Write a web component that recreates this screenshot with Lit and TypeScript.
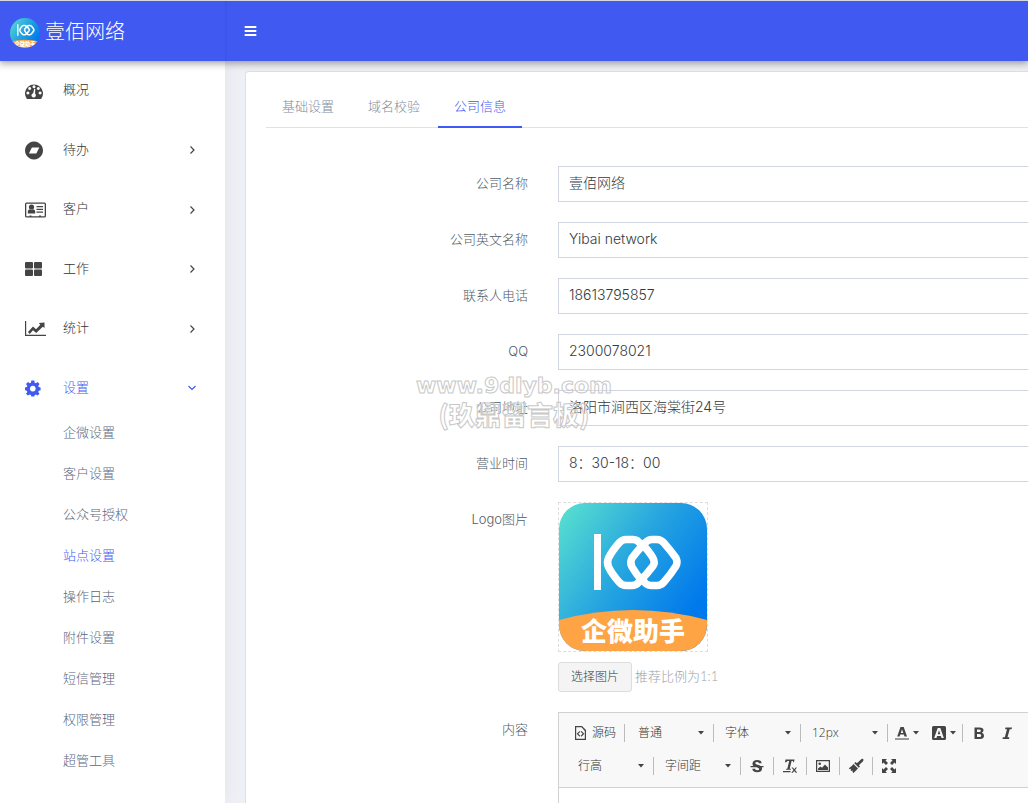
import { LitElement, html, css, svg, nothing } from "lit";
import { customElement, property, state } from "lit/decorators.js";

const icons = {
  gauge: svg`<path fill-rule="evenodd" d="M1.600 17.500A9 9 0 1 1 16.400 17.500Q16 18 15.300 18H2.700Q2 18 1.600 17.500ZM9 4.200a1.500 1.500 0 1 0 0.010 0ZM4.700 6a1.500 1.500 0 1 0 0.010 0ZM13.300 6a1.500 1.500 0 1 0 0.010 0ZM2.900 10.500a1.500 1.500 0 1 0 0.010 0ZM15.100 10.500a1.500 1.500 0 1 0 0.010 0ZM9.200 7.800L8.200 12.200A2.200 2.200 0 1 0 10 12.600L10.300 8.100Z"/>`,
  disc: svg`<path fill-rule="evenodd" d="M9 1.500a9 9 0 1 0 .01 0ZM6.900 7.500H14.300L11.300 13.500H3.900Z"/>`,
  card: svg`<path fill-rule="evenodd" d="M1.500 2.500H19.500Q21 2.500 21 4V16Q21 17.500 19.500 17.500H1.500Q0 17.500 0 16V4Q0 2.500 1.500 2.500ZM1.300 3.800V16.200H4.500V15.500H6.500V16.200H14V15.500H16V16.200H19.700V3.800Z"/><circle cx="6.500" cy="7" r="2.600"/><path d="M2.800 13.500V11.500Q2.800 9.500 5 9.300Q6.500 10.300 8 9.300Q10.200 9.500 10.200 11.500V13.500ZM11.500 6H18V7.200H11.500ZM11.500 8.800H18V10H11.500ZM11.500 11.500H18V12.700H11.500Z"/>`,
  grid: svg`<rect x="0" y="3" width="8" height="6.500" rx="1"/><rect x="9" y="3" width="8" height="6.500" rx="1"/><rect x="0" y="10.500" width="8" height="6.500" rx="1"/><rect x="9" y="10.500" width="8" height="6.500" rx="1"/>`,
  chart: svg`<path d="M0 2H1.200V15.800H21V17H0ZM3 13.100L8 7.500L11 10.200L15.300 5.700L13.800 4.100L19.500 3.500V9.100L17.800 7.700L11.200 14.100L8 11.200L4.700 14.900Z"/>`,
  gear: svg`<path fill-rule="evenodd" d="M6.300 2.500H9.300L9.700 4.800L10.900 5.300L12.600 4L14.500 6L13.200 7.900L13.700 9.100L15.600 9.500V12.300L13.700 12.700L13.200 13.900L14.500 15.800L12.600 17.500L10.900 16.400L9.700 16.900L9.300 18.500H6.300L5.900 16.900L4.700 16.400L3 17.500L1 15.800L2.300 13.900L1.800 12.700L0 12.300V9.500L1.800 9.100L2.300 7.900L1 6L3 4L4.700 5.300L5.900 4.800ZM7.800 7.800a2.900 2.900 0 1 0 .01 0Z"/>`,
};

const logo = (id: string) => svg`
  <defs>
    <linearGradient id=${id} x1="0" y1="0.100" x2="1" y2="0.800">
      <stop offset="0" stop-color="#56ddd0"></stop>
      <stop offset="0.450" stop-color="#26a5e0"></stop>
      <stop offset="0.900" stop-color="#0079ec"></stop>
    </linearGradient>
    <clipPath id=${id + "-clip"}><rect width="148" height="148" rx="26"></rect></clipPath>
  </defs>
  <g clip-path=${`url(#${id}-clip)`}>
    <rect width="148" height="148" fill=${`url(#${id})`}></rect>
    <path d="M0 117Q74 97 148 117V148H0Z" fill="#ffa444"></path>
    <path d="M38.500 31V87" stroke="#fff" stroke-width="7" fill="none"></path>
    <g fill="none" stroke="#fff" stroke-width="7.500" stroke-linejoin="round">
      <path d="M82 42Q79 36.500 74 36.500H67Q63 36.500 60 40Q53 48 49.500 55Q47.500 59.500 49.500 64Q53 71 60 79Q63 82.500 67 82.500H73Q77 82.500 80 79Q88 71 94 63Q96.500 59.500 94 55Q90 48 82 40"></path>
      <path d="M84 77Q87 82.500 92 82.500H98Q102 82.500 105 79Q112 71 117 63Q119 59.500 117 55Q112 48 105 40Q102 36.500 98 36.500H93Q89 36.500 86 40Q78 48 73 55Q70.500 59.500 73 64Q77 71 84 79"></path>
    </g>
    <text x="74" y="138" text-anchor="middle" fill="#fff" font-size="26" font-weight="900" font-family="Noto Sans CJK SC, sans-serif">企微助手</text>
  </g>`;

interface MenuItem { label: string; icon: keyof typeof icons; children?: boolean; }

const menu: MenuItem[] = [
  { label: "概况", icon: "gauge" },
  { label: "待办", icon: "disc", children: true },
  { label: "客户", icon: "card", children: true },
  { label: "工作", icon: "grid", children: true },
  { label: "统计", icon: "chart", children: true },
  { label: "设置", icon: "gear", children: true },
];
const settings = ["企微设置", "客户设置", "公众号授权", "站点设置", "操作日志", "附件设置", "短信管理", "权限管理", "超管工具"];
const fields = [
  ["公司名称", "壹佰网络"],
  ["公司英文名称", "Yibai network"],
  ["联系人电话", "18613795857"],
  ["QQ", "2300078021"],
  ["公司地址", "洛阳市涧西区海棠街24号"],
  ["营业时间", "8：30-18：00"],
];

@customElement("side-menu")
class SideMenu extends LitElement {
  @property() open = "设置";
  @state() current = "站点设置";

  static styles = css`
    :host { display: block; background: #fff; }
    ul { list-style: none; margin: 0; padding: 0; }
    a { color: #444; text-decoration: none; font-size: 13px; line-height: 1.5; }
    .item { display: grid; grid-template-columns: 22px 1fr 10px; column-gap: 16px; align-items: center; padding: 20px 28px 20px 25px; }
    .text { margin: -2px 0 2px; color: #333; }
    .icon { width: 22px; height: 20px; fill: currentColor; margin: -1px 0; }
    .chevron { width: 10px; height: 10px; fill: none; stroke: currentColor; stroke-width: 1.2; }
    .on, .on .text { color: #3f5af3; }
    .sub { display: grid; gap: 21px; padding: 4px 0 32px 63px; }
    .sub a { display: block; line-height: 20px; color: #5b677d; }
    .sub .on { color: #3f5af3; }
  `;

  render() {
    return html`<nav><ul>${menu.map((m) => {
      const on = m.label === this.open;
      return html`<li>
        <a href="#" class="item ${on ? "on" : ""}">
          <svg class="icon" viewBox="0 0 22 20">${icons[m.icon]}</svg>
          <span class="text">${m.label}</span>
          ${m.children ? html`<svg class="chevron" viewBox="0 0 10 10"><path d=${on ? "M1.500 3L5 6.500L8.500 3" : "M3.500 1.500L7 5L3.500 8.500"}></path></svg>` : nothing}
        </a>
        ${on ? html`<ul class="sub">${settings.map((s) => html`<li><a href="#" class=${s === this.current ? "on" : ""}>${s}</a></li>`)}</ul>` : nothing}
      </li>`;
    })}</ul></nav>`;
  }
}

@customElement("rich-editor")
class RichEditor extends LitElement {
  static styles = css`
    :host { display: flex; flex-direction: column; border: 1px solid #d1d1d1; border-right: 0; background: #fff; }
    .bar { background: #f8f8f8; border-bottom: 1px solid #d1d1d1; padding: 7px 0 8px 10px; display: grid; row-gap: 7px; }
    .row { display: flex; align-items: center; height: 26px; }
    .row + .row { margin-left: -2px; }
    .sep { width: 1px; height: 18px; background: #bcbcbc; flex: none; }
    button { border: 0; background: none; padding: 0; height: 26px; width: 32px; flex: none; display: flex; align-items: center; justify-content: center; gap: 3px; color: #333; font: 300 12px/20px "Open Sans", "Noto Sans CJK SC", sans-serif; }
    .source { width: 55px; gap: 4px; padding-right: 5px; }
    .color { width: 37px; }
    .style { width: 24px; }
    .combo { display: grid; align-items: center; width: 86px; flex: none; }
    .combo > * { grid-area: 1 / 1; }
    .combo svg { justify-self: end; margin-right: 9px; pointer-events: none; }
    select { appearance: none; border: 0; background: none; width: 100%; height: 26px; margin: 0; padding: 0 20px 0 11px; color: #333; font: 300 12px/20px "Open Sans", "Noto Sans CJK SC", sans-serif; }
    svg { display: block; width: 16px; height: 16px; fill: #444; flex: none; }
    .arrow { width: 6px; height: 4px; }
    .page { flex: 1; min-height: 16px; }
    .first { margin-left: 2px; }
  `;
  private arrow = html`<svg class="arrow" viewBox="0 0 6 4"><path d="M0 0H6L3 3.500Z"></path></svg>`;
  private sep = html`<span class="sep"></span>`;
  private combo(label: string, cls = "") {
    return html`<span class="combo ${cls}"><select aria-label=${label}><option>${label}</option></select>${this.arrow}</span>`;
  }
  render() {
    return html`
      <div class="bar" role="toolbar">
        <div class="row">
          <button class="source"><svg viewBox="0 0 16 16"><path fill-rule="evenodd" d="M3 1H10L14 5V15H3ZM4.200 2.200V13.800H12.800V6L9.500 2.200ZM7.500 6L8.300 6.800L6.300 8.800L8.300 10.800L7.500 11.700L4.700 8.800ZM9.500 6L12.300 8.800L9.500 11.700L8.700 10.800L10.700 8.800L8.700 6.800Z"></path></svg>源码</button>
          ${this.sep}${this.combo("普通", "first")}${this.sep}${this.combo("字体")}${this.sep}${this.combo("12px")}${this.sep}
          <button class="color" aria-label="文本颜色"><svg viewBox="0 0 16 16"><path fill-rule="evenodd" d="M6.500 2H9.700L13 11.500H10.500L9.900 9.600H6.200L5.600 11.500H3.200ZM8 4.300L6.800 7.900H9.300Z"></path><path d="M1 13H15V15H1Z" fill="#999"></path></svg>${this.arrow}</button>
          <button class="color" aria-label="背景颜色"><svg viewBox="0 0 16 16"><path fill-rule="evenodd" d="M2.500 1H13.500Q15 1 15 2.500V13.500Q15 15 13.500 15H2.500Q1 15 1 13.500V2.500Q1 1 2.500 1ZM6.700 3L3.200 13H5.400L6.100 10.900H9.900L10.600 13H12.800L9.300 3ZM8 5.200L9.300 9.200H6.700Z"></path></svg>${this.arrow}</button>
          ${this.sep}
          <button aria-label="加粗"><svg viewBox="0 0 16 16"><path fill-rule="evenodd" d="M3.500 2.500H8.500Q12.500 2.500 12.500 5.300Q12.500 7.100 10.800 7.800Q13 8.500 13 10.700Q13 14 8.900 14H3.500ZM6 4.500V7H8.300Q9.900 7 9.900 5.700Q9.900 4.500 8.300 4.500ZM6 8.900V12H8.500Q10.300 12 10.300 10.400Q10.300 8.900 8.500 8.900Z"></path></svg></button>
          <button class="style" aria-label="倾斜"><svg viewBox="0 0 16 16"><path d="M6.500 2.500H13L12.600 4.200H10.700L8.500 12.300H10.400L10 14H3.500L3.900 12.300H5.800L8 4.200H6.100Z"></path></svg></button>
        </div>
        <div class="row">
          ${this.combo("行高")}${this.sep}${this.combo("字间距")}${this.sep}
          <button aria-label="删除线"><svg viewBox="0 0 16 16"><path d="M12.600 5.200H9.900Q9.900 4 8 4Q6.200 4 6.200 5.200Q6.200 6.100 8.600 6.700Q10.600 7.200 11.600 8H14.500V9.300H12.700Q13.200 10 13 11Q12.600 14.200 8.100 14.200Q3.500 14.200 3.300 10.800H6.100Q6.300 12.300 8.200 12.300Q10.200 12.300 10.200 10.900Q10.200 10.100 8.300 9.500L7.500 9.300H1.500V8H4.300Q3.400 7 3.500 5.500Q3.800 2 8 2Q12.500 2 12.600 5.200Z"></path></svg></button>
          ${this.sep}
          <button aria-label="清除格式"><svg viewBox="0 0 16 16"><path d="M3.500 1.500H12.500L12 4.200H11.200L11.100 3H9.600L7.700 10.700H9L8.700 11.700H4L4.300 10.700H5.300L7.200 3H5.400L4.400 4.200H3ZM1 13H8.500V14.200H1ZM9.500 9.500H11L12.300 11.200L13.600 9.500H15L13.100 12.100L15.200 14.800H13.700L12.200 12.900L10.800 14.800H9.300L11.500 12.100Z"></path></svg></button>
          ${this.sep}
          <button aria-label="图片"><svg viewBox="0 0 16 16"><path fill-rule="evenodd" d="M1 2H15V14H1ZM2.200 3.200V12.800H13.800V3.200Z"></path><circle cx="4.700" cy="5.700" r="1.300"></circle><path d="M3 12V10.500L5.500 8.500L7 9.800L10 6.500L13 9.500V12Z"></path></svg></button>
          ${this.sep}
          <button aria-label="格式刷"><svg viewBox="0 0 16 16"><path d="M13.800 .8Q15.200 .4 15.500 1.800Q15.500 3 14.300 3.900L10.900 7.200L12 8.500L10.800 9.700L6.300 5.300L7.500 4.100L8.900 5.200ZM5.500 6.100L10 10.500L5.500 15L4.300 13.700L5 12.500L3.400 13L2.500 12L3.300 10.600L1.800 11.300L.8 10.200Q3.500 9 5.500 6.100Z"></path></svg></button>
          ${this.sep}
          <button aria-label="全屏"><svg viewBox="0 0 16 16"><path d="M1 1H6L4.500 2.500L7 5L5 7L2.500 4.500L1 6ZM15 1V6L13.500 4.500L11 7L9 5L11.500 2.500L10 1ZM1 15V10L2.500 11.500L5 9L7 11L4.500 13.500L6 15ZM15 15H10L11.500 13.500L9 11L11 9L13.500 11.500L15 10Z"></path></svg></button>
        </div>
      </div>
      <div class="page" contenteditable="true" role="textbox" aria-label="内容"></div>`;
  }
}

@customElement("app-root")
class AppRoot extends LitElement {
  @state() tab = "公司信息";

  static styles = css`
    :host { display: flex; flex-direction: column; height: 100vh; overflow: hidden; box-sizing: border-box; border-top: 1px solid #d5d9df; background: #eef0f5; font: 300 13px/20px "Noto Sans CJK SC", sans-serif; color: #505b66; }
    * { box-sizing: border-box; }
    header { display: flex; height: 60px; flex: none; background: #405af1; color: #fff; box-shadow: 0 1px 8px 1px rgba(0, 0, 0, 0.4); position: relative; z-index: 1; }
    .brand { display: flex; align-items: center; gap: 5px; width: 225px; padding: 0 10px; font-size: 20px; color: #fff; text-decoration: none; box-shadow: 1px 0 2px rgba(0, 0, 0, 0.08); }
    .brand-logo { width: 30px; height: 30px; border-radius: 50%; margin-top: 3px; }
    .toggle { border: 0; background: none; padding: 0 19px; color: #fff; }
    .toggle svg { display: block; width: 13px; height: 12px; fill: currentColor; }
    .body { display: flex; flex: 1; min-height: 0; }
    side-menu { width: 225px; flex: none; box-shadow: 0 0 20px rgba(0, 0, 0, 0.05); }
    main { flex: 1; min-width: 0; display: flex; padding: 10px 0 0 20px; }
    .card { flex: 1; min-width: 0; display: flex; flex-direction: column; gap: 38px; background: #fff; border: 1px solid #dbe0e6; border-width: 1px 0 0 1px; border-radius: 4px 0 0 0; padding: 20px 0 0 20px; }
    .tabs { display: flex; gap: 2px; height: 36px; flex: none; box-shadow: inset 0 -1px #dee2e6; }
    .tab { border: 0; background: none; font: inherit; color: #808b9e; padding: 0 16px 6px; border-bottom: 2px solid transparent; }
    .tab.on { color: #3f5af3; border-color: #3f5af3; }
    form { flex: 1; display: flex; flex-direction: column; gap: 20px; }
    .field { display: grid; grid-template-columns: minmax(120px, 262px) 1fr; column-gap: 30px; }
    .label { text-align: right; padding-top: 7px; }
    .latin { font-family: Inter, "Noto Sans CJK SC", sans-serif; }
    .input { width: 100%; height: 36px; border: 1px solid #d0d5e1; border-right: 0; border-radius: 0; background: #fff; padding: 0 10px 4px; color: #333a40; font: 300 14px/20px Inter, "Noto Sans CJK SC", sans-serif; outline: 0; }
    .upload { display: grid; gap: 10px; justify-items: start; }
    .picture { width: 150px; height: 150px; border: 1px dashed #ddd; }
    .picture svg { display: block; width: 100%; height: 100%; }
    .choose { display: flex; align-items: center; gap: 3px; color: #a0a3a8; }
    .choose button { height: 30px; padding: 0 12px 2px; border: 1px solid #ddd; border-radius: 3px; background: #f4f4f4; color: #333c48; font: 300 12px/20px "Noto Sans CJK SC", sans-serif; }
    .hint { font-family: Lato, "Noto Sans CJK SC", sans-serif; margin-bottom: 2px; }
    .grow { flex: 1; }
    .mark { position: absolute; left: 50%; top: 400px; transform: translate(-50%, -50%); text-align: center; pointer-events: none; white-space: nowrap; color: rgba(255, 255, 255, 0.3); -webkit-text-stroke: 1px #c8c8c8; font: bold 22px/28px "DejaVu Sans", sans-serif; z-index: 2; }
    .mark-cn { display: block; margin-right: -8px; padding-right: 8px; font: 900 26px/28px "Noto Sans CJK SC", sans-serif; }
  `;

  render() {
    return html`
      <header>
        <a class="brand" href="#"><svg class="brand-logo" viewBox="0 0 148 148">${logo("small")}</svg><span>壹佰网络</span></a>
        <button class="toggle" aria-label="菜单"><svg viewBox="0 0 13 12"><path d="M1 1H12Q13 2 12 3H1Q0 2 1 1ZM1 5H12Q13 6 12 7H1Q0 6 1 5ZM1 9H12Q13 10 12 11H1Q0 10 1 9Z"></path></svg></button>
      </header>
      <div class="body">
        <side-menu></side-menu>
        <main><section class="card">
          <div class="tabs" role="tablist">
            ${["基础设置", "域名校验", "公司信息"].map((t) => html`<button role="tab" class="tab ${t === this.tab ? "on" : ""}" @click=${() => (this.tab = t)}>${t}</button>`)}
          </div>
          <form>
            ${fields.map(([label, value], i) => html`<div class="field"><label class="label latin" for=${"f" + i}>${label}</label><input class="input" id=${"f" + i} .value=${value} /></div>`)}
            <div class="field">
              <label class="label latin" for="choose">Logo图片</label>
              <div class="upload">
                <div class="picture"><svg viewBox="0 0 148 148">${logo("large")}</svg></div>
                <div class="choose"><button type="button" id="choose">选择图片</button><span class="hint">推荐比例为1:1</span></div>
              </div>
            </div>
            <div class="field grow"><span class="label">内容</span><rich-editor></rich-editor></div>
          </form>
        </section></main>
      </div>
      <div class="mark">www.9dlyb.com<span class="mark-cn">(玖鼎留言板)</span></div>`;
  }
}
